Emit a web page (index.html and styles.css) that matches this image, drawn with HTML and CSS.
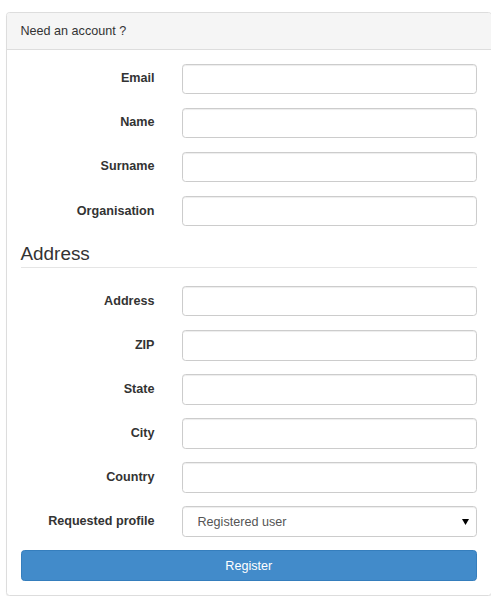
FILE: index.html
```html
<!DOCTYPE html>
<html>
<head>
<meta charset="utf-8">
<link rel="stylesheet" href="styles.css">
</head>
<body>
<div class="panel">
  <div class="panel-heading">Need an account ?</div>
  <form class="panel-body">
    <div class="form-group"><label class="control-label">Email</label><input class="form-control" type="text"></div>
    <div class="form-group"><label class="control-label">Name</label><input class="form-control" type="text"></div>
    <div class="form-group"><label class="control-label">Surname</label><input class="form-control" type="text"></div>
    <div class="form-group"><label class="control-label">Organisation</label><input class="form-control" type="text"></div>
    <div class="legend">Address</div>
    <div class="form-group"><label class="control-label">Address</label><input class="form-control" type="text"></div>
    <div class="form-group"><label class="control-label">ZIP</label><input class="form-control" type="text"></div>
    <div class="form-group"><label class="control-label">State</label><input class="form-control" type="text"></div>
    <div class="form-group"><label class="control-label">City</label><input class="form-control" type="text"></div>
    <div class="form-group"><label class="control-label">Country</label><input class="form-control" type="text"></div>
    <div class="form-group"><label class="control-label">Requested profile</label>
      <div class="select-wrap">
        <select class="form-control select"><option>Registered user</option></select>
        <svg class="caret" width="7" height="6" viewBox="0 0 7 6"><path d="M0 0H7L3.5 6Z" fill="#000"/></svg>
      </div>
    </div>
    <button type="button" class="btn">Register</button>
  </form>
</div>
</body>
</html>
```
FILE: styles.css
```css
html, body {
  margin: 0;
  padding: 0;
  overflow: hidden;
  background: #fff;
}
body {
  font-family: "Liberation Sans", Arial, sans-serif;
  font-size: 12.6px;
  line-height: 18px;
  color: #333;
  padding-top: 12px;
}
.panel {
  margin-left: 6px;
  width: 486px;
  box-sizing: border-box;
  border: 1px solid #ddd;
  border-radius: 3.6px;
  box-shadow: 0 1px 1px rgba(0,0,0,0.05);
  background: #fff;
}
.panel-heading {
  background: #f5f5f5;
  border-bottom: 1px solid #ddd;
  padding: 9px 13.5px;
  border-radius: 3px 3px 0 0;
  color: #333;
}
.panel-body {
  padding: 13.5px 14px 13.5px 13.5px;
  display: flex;
  flex-direction: column;
}
.form-group {
  display: grid;
  grid-template-columns: 134px 1fr;
  column-gap: 27px;
  margin-bottom: 13.5px;
}
.control-label {
  font-weight: bold;
  text-align: right;
  padding-top: 5.8px;
}
.form-control {
  display: block;
  box-sizing: border-box;
  width: 100%;
  height: 30.6px;
  padding: 5.4px 10.8px;
  font-family: inherit;
  font-size: 12.6px;
  color: #555;
  background: #fff;
  border: 1px solid #ccc;
  border-radius: 3.6px;
  box-shadow: inset 0 1px 1px rgba(0,0,0,0.075);
  margin: 0;
}
.legend {
  font-size: 18.9px;
  line-height: 27px;
  color: #333;
  border-bottom: 1px solid #e5e5e5;
  margin-bottom: 18px;
}
.select-wrap {
  position: relative;
}
.select {
  appearance: none;
  -webkit-appearance: none;
  padding-left: 15px;
}
.caret {
  position: absolute;
  right: 8px;
  top: 12.5px;
  pointer-events: none;
}
.btn {
  display: block;
  width: 100%;
  height: 30.6px;
  box-sizing: border-box;
  font-family: inherit;
  font-size: 12.6px;
  color: #fff;
  background: #428bca;
  border: 1px solid #357ebd;
  border-radius: 3.6px;
  padding: 0;
  margin: 0;
}
```
